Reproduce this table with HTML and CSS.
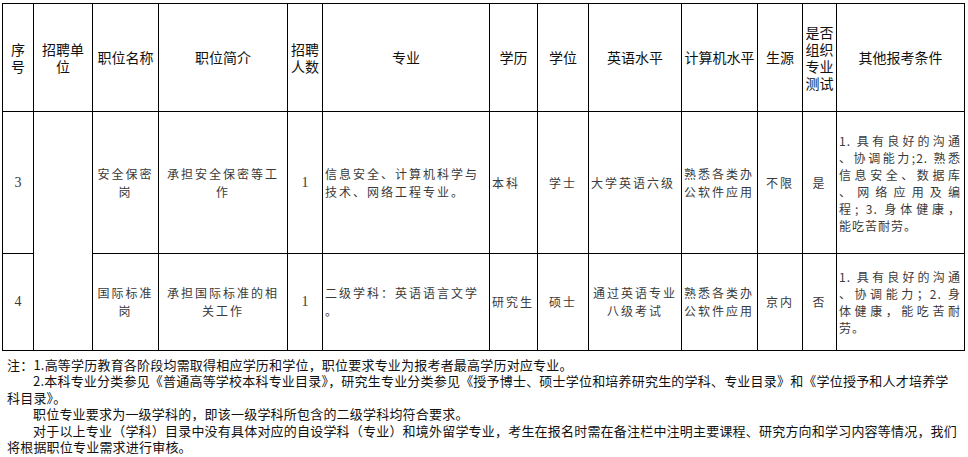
FILE: index.html
```html
<!DOCTYPE html>
<html lang="zh-CN">
<head>
<meta charset="utf-8">
<title>职位表</title>
<link rel="stylesheet" href="styles.css">
</head>
<body>
<div class="page">
  <table class="jobs">
    <colgroup>
      <col style="width:31px"><col style="width:59px"><col style="width:66px"><col style="width:129px">
      <col style="width:35px"><col style="width:167px"><col style="width:48px"><col style="width:51px">
      <col style="width:93px"><col style="width:76px"><col style="width:45px"><col style="width:34px">
      <col style="width:128px">
    </colgroup>
    <tr class="head">
      <th>序<br>号</th>
      <th>招聘单<br>位</th>
      <th>职位名称</th>
      <th>职位简介</th>
      <th>招聘<br>人数</th>
      <th>专业</th>
      <th>学历</th>
      <th>学位</th>
      <th>英语水平</th>
      <th>计算机水平</th>
      <th>生源</th>
      <th>是否<br>组织<br>专业<br>测试</th>
      <th>其他报考条件</th>
    </tr>
    <tr class="r3">
      <td class="num">3</td>
      <td rowspan="2"></td>
      <td class="c">安全保密<br>岗</td>
      <td class="c">承担安全保密等工<br>作</td>
      <td class="num">1</td>
      <td class="l">信息安全、计算机科学与<br>技术、网络工程专业。</td>
      <td class="l">本科</td>
      <td class="c">学士</td>
      <td class="l">大学英语六级</td>
      <td class="l">熟悉各类办<br>公软件应用</td>
      <td class="c">不限</td>
      <td class="c">是</td>
      <td class="other">
        <span class="jl">1. 具有良好的沟通</span>
        <span class="jl">、协调能力;2. 熟悉</span>
        <span class="jl">信息安全、数据库</span>
        <span class="jl">、网络应用及编</span>
        <span class="jl">程; 3. 身体健康，</span>
        <span class="ll">能吃苦耐劳。</span>
      </td>
    </tr>
    <tr class="r4">
      <td class="num">4</td>
      <td class="c">国际标准<br>岗</td>
      <td class="c">承担国际标准的相<br>关工作</td>
      <td class="num">1</td>
      <td class="l">二级学科：英语语言文学<br>。</td>
      <td class="l">研究生</td>
      <td class="c">硕士</td>
      <td class="c">通过英语专业<br>八级考试</td>
      <td class="l">熟悉各类办<br>公软件应用</td>
      <td class="c">京内</td>
      <td class="c">否</td>
      <td class="other">
        <span class="jl">1. 具有良好的沟通</span>
        <span class="jl">、协调能力；2. 身</span>
        <span class="jl">体健康，能吃苦耐</span>
        <span class="ll">劳。</span>
      </td>
    </tr>
  </table>
  <div class="notes">
    <p class="first">注：1.高等学历教育各阶段均需取得相应学历和学位，职位要求专业为报考者最高学历对应专业。</p>
    <p class="ind">2.本科专业分类参见《普通高等学校本科专业目录》，研究生专业分类参见《授予博士、硕士学位和培养研究生的学科、专业目录》和《学位授予和人才培养学<br><span class="out">科目录》。</span></p>
    <p class="ind">职位专业要求为一级学科的，即该一级学科所包含的二级学科均符合要求。</p>
    <p class="ind">对于以上专业（学科）目录中没有具体对应的自设学科（专业）和境外留学专业，考生在报名时需在备注栏中注明主要课程、研究方向和学习内容等情况，我们<br><span class="out">将根据职位专业需求进行审核。</span></p>
  </div>
</div>
</body>
</html>
```
FILE: styles.css
```css
html, body {
  margin: 0;
  padding: 0;
  background: #ffffff;
}

.page {
  padding: 3px 0 0 2px;
  width: 966px;
  font-family: "Noto Sans CJK SC", "Noto Sans", sans-serif;
}

.jobs {
  border-collapse: collapse;
  table-layout: fixed;
  width: 962px;
}

.jobs th, .jobs td {
  border: 1px solid #000;
  padding: 0 2px;
  vertical-align: middle;
  overflow: hidden;
}

.jobs th {
  font-weight: normal;
  font-size: 14px;
  line-height: 17px;
  color: #111;
  text-align: center;
  padding: 0 1px;
}

.head { height: 108px; }
.r3 { height: 142px; }
.r4 { height: 97px; }

.jobs td {
  font-size: 12px;
  line-height: 18px;
  letter-spacing: 2px;
  color: #3a3a3a;
}

.jobs td.c { text-align: center; }
.jobs td.l { text-align: left; }

.jobs td.num {
  text-align: center;
  font-family: "Liberation Serif", "DejaVu Serif", serif;
  font-size: 14px;
  letter-spacing: 0;
}

.jobs td.other {
  padding: 0 3px 0 2px;
  line-height: 17px;
  letter-spacing: 1px;
}

.jl {
  display: block;
  text-align: justify;
  text-align-last: justify;
  white-space: nowrap;
}

.ll {
  display: block;
  text-align: left;
}

.notes {
  margin-top: 6px;
  padding-left: 5px;
  font-size: 13px;
  line-height: 16.4px;
  letter-spacing: 0.2px;
  color: #111;
}

.notes p {
  margin: 0;
  white-space: nowrap;
}

.notes p.ind {
  padding-left: 26px;
}

.notes .out {
  margin-left: -26px;
}
```
